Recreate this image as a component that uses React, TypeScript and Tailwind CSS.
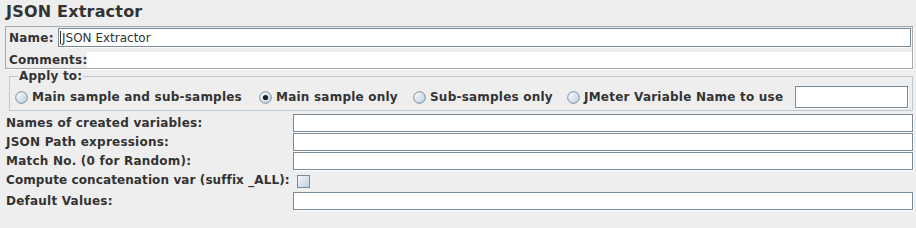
import React from 'react';

const Radio = ({ checked }: { checked?: boolean }) => (
  <svg width="13" height="13" viewBox="0 0 13 13" className="shrink-0">
    <defs>
      <linearGradient id={checked ? 'rg-on' : 'rg-off'} x1="0" y1="0" x2="1" y2="1">
        <stop offset="0" stopColor="#ffffff" />
        <stop offset="1" stopColor="#b8cce0" />
      </linearGradient>
    </defs>
    <circle cx="6.5" cy="6.5" r="5.8" fill={`url(#${checked ? 'rg-on' : 'rg-off'})`} stroke="#7a8a99" strokeWidth="1" />
    {checked && <circle cx="6.5" cy="6.5" r="2.6" fill="#1e1e1e" />}
  </svg>
);

const Field = ({ className = '' }: { className?: string }) => (
  <div className={`h-[18px] bg-white border border-[#7a8a99] shadow-[1px_1px_0_#ffffff] ${className}`} />
);

const rows = [
  'Names of created variables:',
  'JSON Path expressions:',
  'Match No. (0 for Random):',
];

export default function App() {
  return (
    <div className="w-[916px] h-[228px] overflow-hidden bg-[#eeeeee] text-[#333333] font-['DejaVu_Sans',sans-serif] text-[12px] font-bold leading-[14px] tracking-[0.22px] whitespace-nowrap">
      {/* Title */}
      <div className="h-[26px] pl-[6px] pt-[1px] text-[16px] leading-[22px] tracking-[0.2px]">JSON Extractor</div>

      {/* Name / Comments panel */}
      <div className="ml-[5px] mr-[3px] h-[43px] border border-[#a4a9ad] shadow-[1px_1px_0_#ffffff]">
        <div className="flex items-center h-[19px] mt-[1px]">
          <div className="w-[52px] shrink-0 pl-[3px]">Name:</div>
          <div className="flex-1 mr-[1px] h-[19px] bg-white border border-[#7a8a99] shadow-[1px_1px_0_#ffffff] flex items-center pl-[1px] font-normal tracking-normal">
            <span className="w-px h-[13px] bg-[#333333] mr-px" />
            <span>JSON Extractor</span>
          </div>
        </div>
        <div className="flex items-center h-[16px] mt-[5px]">
          <div className="w-[81px] shrink-0 pl-[3px]">Comments:</div>
          <div className="flex-1 h-[16px] bg-white" />
        </div>
      </div>

      {/* Apply to */}
      <fieldset className="ml-[9px] mr-[3px] border border-[#bdc9d3] pl-[5px] pt-[3px] pb-[2px]">
        <legend className="ml-[3px] px-[1px] leading-[14px]">Apply to:</legend>
        <div className="flex items-center h-[22px]">
          <label className="w-[244px] shrink-0 flex items-center gap-[4px]">
            <Radio />
            <span>Main sample and sub-samples</span>
          </label>
          <label className="w-[154px] shrink-0 flex items-center gap-[4px]">
            <Radio checked />
            <span>Main sample only</span>
          </label>
          <label className="w-[154px] shrink-0 flex items-center gap-[4px]">
            <Radio />
            <span>Sub-samples only</span>
          </label>
          <label className="w-[228px] shrink-0 flex items-center gap-[4px]">
            <Radio />
            <span>JMeter Variable Name to use</span>
          </label>
          <div className="w-[113px] h-[22px] bg-white border border-[#7a8a99] shadow-[1px_1px_0_#ffffff]" />
        </div>
      </fieldset>

      {/* Settings */}
      <div className="mt-[3px] ml-[6px] mr-[3px] grid grid-cols-[287px_1fr]">
        {rows.map((r) => (
          <React.Fragment key={r}>
            <div className="h-[19px] flex items-center pb-[2px]">{r}</div>
            <div className="h-[19px]">
              <Field />
            </div>
          </React.Fragment>
        ))}
        <div className="h-[21px] flex items-center pb-[3px] tracking-[0.1px]">Compute concatenation var (suffix _ALL):</div>
        <div className="h-[21px] flex items-center">
          <div className="ml-[4px] w-[13px] h-[13px] border border-[#7a8a99] bg-gradient-to-br from-[#f4f7fa] to-[#bfd0e0]" />
        </div>
        <div className="h-[19px] flex items-center pb-[2px]">Default Values:</div>
        <div className="h-[19px]">
          <Field />
        </div>
      </div>
    </div>
  );
}
